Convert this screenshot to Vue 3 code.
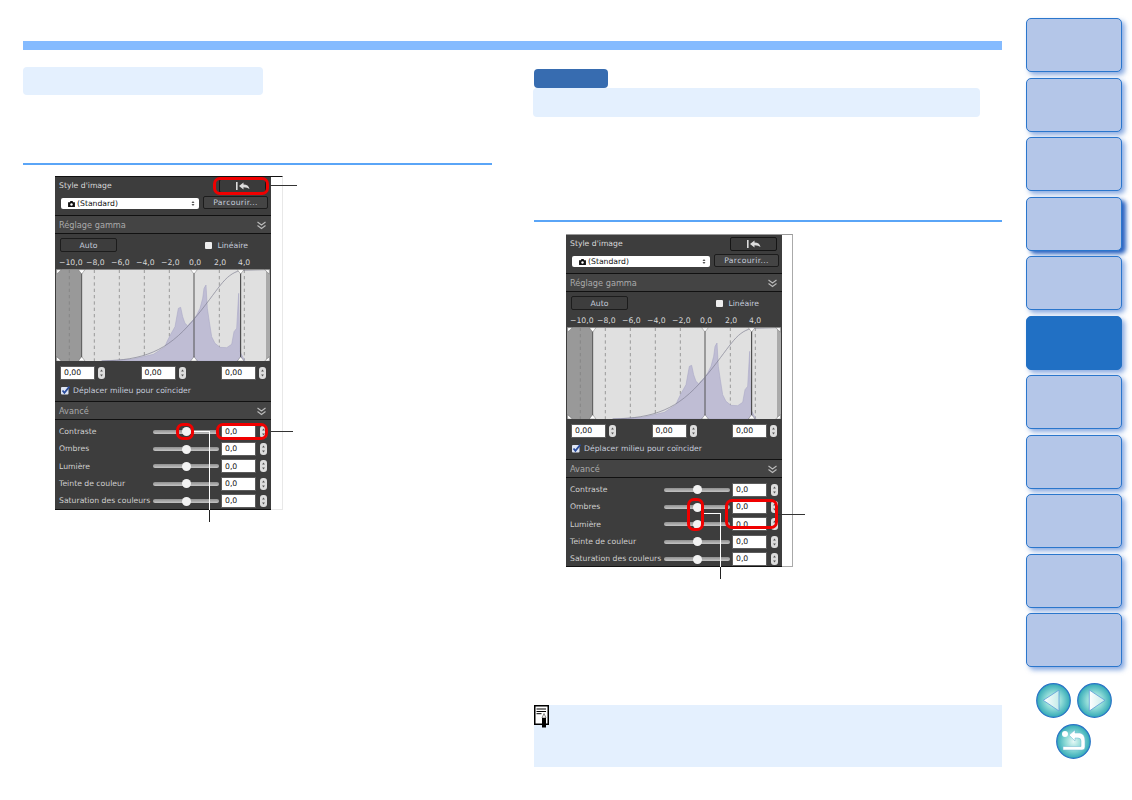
<script setup>
const sliders = ['Contraste', 'Ombres', 'Lumière', 'Teinte de couleur', 'Saturation des couleurs']
const scale = ['−10,0', '−8,0', '−6,0', '−4,0', '−2,0', '0,0', '2,0', '4,0']
const navItems = Array.from({ length: 11 }, (_, i) => i)
const dashes = [58, 133, 208, 283, 358, 508, 583]
const histogram =
  '155,288 245,283 310,268 345,245 350,232 362,208 375,185 385,130 392,127 398,155 405,175 413,182 420,175 430,165 440,150 450,130 458,100 462,70 468,60 472,130 478,170 485,215 495,235 510,247 530,248 545,238 552,200 560,190 566,85 570,260 583,285 585,288'

const box = (o) => ({ left: o.x + 'px', top: o.y + 'px', width: o.w + 'px', height: o.h + 'px' })

const panels = [
  {
    cls: 'first',
    marks: [
      { x: 158, y: 0, w: 56, h: 18 },
      { x: 121, y: 246, w: 18, h: 17 },
      { x: 161, y: 246, w: 52, h: 17 },
    ],
    lines: [
      { x: 215, y: 8, w: 27, h: 1, c: '#333' },
      { x: 216, y: 254, w: 22, h: 1, c: '#333' },
      { x: 139, y: 254, w: 15, h: 1, c: '#fff' },
      { x: 154, y: 254, w: 1, h: 79, c: '#fff' },
      { x: 154, y: 333, w: 1, h: 12, c: '#222' },
    ],
  },
  {
    cls: 'second',
    marks: [
      { x: 121, y: 263, w: 17, h: 33 },
      { x: 159, y: 264, w: 53, h: 30 },
    ],
    lines: [
      { x: 212, y: 279, w: 27, h: 1, c: '#333' },
      { x: 138, y: 278, w: 16, h: 1, c: '#fff' },
      { x: 154, y: 278, w: 1, h: 54, c: '#fff' },
      { x: 154, y: 332, w: 1, h: 12, c: '#222' },
    ],
  },
]
</script>

<template>
  <div class="page">
    <main class="main">
      <div class="topbar"></div>
      <div class="cols">
        <section v-for="(p, pi) in panels" :key="p.cls" class="col" :class="p.cls">
          <div v-if="pi === 1" class="badge"></div>
          <div class="card"></div>
          <div class="rule"></div>

          <div class="figure">
            <div class="panel">
              <div class="sec-style">
                <div class="row-title">
                  <span class="lbl">Style d'image</span>
                  <span class="reset">
                    <svg width="14" height="8" viewBox="0 0 14 8">
                      <rect x="0" y="0" width="1.6" height="8" fill="#ddd" />
                      <path d="M3 4 L7.5 0.5 V2.6 Q12.5 2.6 13.5 7 Q11.5 5.2 7.5 5.2 V7.5 Z" fill="#ddd" />
                    </svg>
                  </span>
                </div>
                <div class="row-select">
                  <span class="select">
                    <svg width="7" height="6" viewBox="0 0 8 7">
                      <path d="M0 1.5 H2 L2.8 0 H5.2 L6 1.5 H8 V7 H0 Z" fill="#111" />
                      <circle cx="4" cy="4" r="1.4" fill="#fff" />
                    </svg>
                    <span class="select-text">(Standard)</span>
                    <svg class="select-caret" width="4" height="7" viewBox="0 0 4 7">
                      <path d="M0.5 3 L2 1 L3.5 3 Z M0.5 4 L2 6 L3.5 4 Z" fill="#555" />
                    </svg>
                  </span>
                  <span class="browse">Parcourir...</span>
                </div>
              </div>

              <div class="sec-head">
                <span>Réglage gamma</span>
                <svg width="9" height="9" viewBox="0 0 9 9">
                  <path d="M0.5 1 L4.5 4 L8.5 1 M0.5 4.5 L4.5 7.5 L8.5 4.5" fill="none" stroke="#bbb" stroke-width="1.1" />
                </svg>
              </div>

              <div class="gamma-top">
                <span class="auto">Auto</span>
                <span class="linear"><i class="check-off"></i>Linéaire</span>
              </div>
              <div class="scale">
                <span v-for="s in scale" :key="s">{{ s }}</span>
              </div>

              <svg class="hist" width="214" height="92" viewBox="18 12 642 276" preserveAspectRatio="none">
                <rect x="18" y="12" width="642" height="276" fill="#e0e0e0" />
                <rect x="18" y="12" width="77" height="276" fill="#999" />
                <rect x="648" y="12" width="12" height="276" fill="#aaa" />
                <line v-for="d in dashes" :key="d" :x1="d" :x2="d" y1="14" y2="288" stroke="#808080" stroke-width="2.2" stroke-dasharray="10 9" />
                <polygon :points="histogram" fill="#bfbdd4" stroke="#a5a3c2" stroke-width="1.5" />
                <line x1="95" x2="95" y1="12" y2="288" stroke="#555" stroke-width="3" />
                <line x1="432" x2="432" y1="12" y2="288" stroke="#555" stroke-width="3" />
                <line x1="572" x2="572" y1="12" y2="288" stroke="#333" stroke-width="3" />
                <path d="M155 288 C280 285 350 260 430 165 S520 30 572 16 L648 14" fill="none" stroke="#7d7d90" stroke-width="2" />
                <rect x="18" y="12" width="642" height="3" fill="#888" />
                <g fill="#fff" stroke="#444" stroke-width="1">
                  <path d="M85 14 H105 L95 27 Z" />
                  <path d="M422 14 H442 L432 27 Z" />
                  <path d="M562 14 H582 L572 27 Z" />
                  <path d="M85 288 H105 L95 275 Z" />
                  <path d="M422 288 H442 L432 275 Z" />
                  <path d="M562 288 H582 L572 275 Z" />
                  <path d="M20 14 H34 L20 27 Z" />
                  <path d="M658 14 H644 L658 27 Z" />
                  <path d="M20 288 H34 L20 275 Z" />
                  <path d="M658 288 H644 L658 275 Z" />
                </g>
              </svg>

              <div class="gamma-inputs">
                <span v-for="n in 3" :key="n" class="field">
                  <span class="input">0,00</span>
                  <svg class="spin" width="7" height="12" viewBox="0 0 7 12">
                    <rect width="7" height="12" rx="3" fill="#ddd" />
                    <path d="M3.5 2.4 L4.9 4.6 H2.1 Z M3.5 9.6 L4.9 7.4 H2.1 Z" fill="#555" />
                  </svg>
                </span>
              </div>

              <div class="midpoint">
                <svg width="9" height="9" viewBox="0 0 9 9">
                  <rect x="0" y="1" width="7.5" height="7.5" rx="1" fill="#dfe6f5" />
                  <path d="M1.5 4.5 L3.4 6.8 L8.5 0.5" fill="none" stroke="#2a4c9c" stroke-width="1.8" />
                </svg>
                <span>Déplacer milieu pour coïncider</span>
              </div>

              <div class="sec-head">
                <span>Avancé</span>
                <svg width="9" height="9" viewBox="0 0 9 9">
                  <path d="M0.5 1 L4.5 4 L8.5 1 M0.5 4.5 L4.5 7.5 L8.5 4.5" fill="none" stroke="#bbb" stroke-width="1.1" />
                </svg>
              </div>

              <div class="sliders">
                <div v-for="s in sliders" :key="s" class="slider-row">
                  <span class="slider-label">{{ s }}</span>
                  <span class="track"><i class="thumb"></i></span>
                  <span class="input">0,0</span>
                  <svg class="spin" width="7" height="12" viewBox="0 0 7 12">
                    <rect width="7" height="12" rx="3" fill="#ddd" />
                    <path d="M3.5 2.4 L4.9 4.6 H2.1 Z M3.5 9.6 L4.9 7.4 H2.1 Z" fill="#555" />
                  </svg>
                </div>
              </div>
            </div>

            <i v-for="(l, i) in p.lines" :key="'l' + i" class="line" :style="{ ...box(l), background: l.c }"></i>
            <i v-for="(m, i) in p.marks" :key="'m' + i" class="mark" :style="box(m)"></i>
          </div>

          <div v-if="pi === 1" class="note">
            <svg width="15" height="23" viewBox="0 0 15 23">
              <rect x="0.75" y="0.75" width="13.5" height="18.5" fill="#fff" stroke="#000" stroke-width="1.5" />
              <path d="M2.5 4 H12 M2.5 6.5 H12 M2.5 8.7 H7.5" stroke="#000" stroke-width="1" />
              <path d="M8 13 L10 8.5 L12 13 Z" fill="#fff" stroke="#555" stroke-width="0.7" />
              <rect x="8" y="13" width="4" height="9.5" fill="#000" />
            </svg>
          </div>
        </section>
      </div>
    </main>

    <aside class="side">
      <div
        v-for="n in navItems"
        :key="n"
        class="nav-btn"
        :class="{ strong: n === 3, active: n === 5 }"
      ></div>
      <div class="arrows">
        <svg width="35" height="35" viewBox="0 0 35 35">
          <defs>
            <radialGradient id="orb" cx="50%" cy="50%" r="55%">
              <stop offset="0%" stop-color="#e6f8f6" />
              <stop offset="45%" stop-color="#8ddad6" />
              <stop offset="100%" stop-color="#1f9fb0" />
            </radialGradient>
            <linearGradient id="tri" x1="0" x2="1" y1="0" y2="0">
              <stop offset="0%" stop-color="#ffffff" />
              <stop offset="100%" stop-color="#c6ecea" />
            </linearGradient>
          </defs>
          <circle cx="17.5" cy="17.5" r="16.8" fill="url(#orb)" stroke="#2a74c6" stroke-width="1.2" />
          <path d="M7.3 17.3 L23 7 V28 Z" fill="url(#tri)" stroke="#5c9cd8" stroke-width="0.8" />
        </svg>
        <svg width="35" height="35" viewBox="0 0 35 35">
          <circle cx="17.5" cy="17.5" r="16.8" fill="url(#orb)" stroke="#2a74c6" stroke-width="1.2" />
          <path d="M28 17.3 L12.3 7 V28 Z" fill="url(#tri)" stroke="#5c9cd8" stroke-width="0.8" />
        </svg>
      </div>
      <svg class="back" width="35" height="35" viewBox="0 0 35 35">
        <circle cx="17.5" cy="17.5" r="16.8" fill="url(#orb)" stroke="#2a74c6" stroke-width="1.2" />
        <circle cx="9" cy="10" r="3" fill="#fff" />
        <path d="M13 11 L19 6 V9 H24 Q29 10 29 17 V23 Q29 26 26 26 H7 V22.5 H25 V17 Q25 14 22 14 H19 V17 Z" fill="#fff" stroke="#6bb5d0" stroke-width="0.5" />
      </svg>
    </aside>
  </div>
</template>

<style>
html, body { background: #fff; }
</style>

<style scoped>
.page {
  display: flex;
  width: 1132px;
  height: 800px;
  padding-left: 23px;
  box-sizing: border-box;
  overflow: hidden;
  background: #fff;
  font-family: "DejaVu Sans", sans-serif;
  font-size: 7.7px;
}
.main { width: 979px; padding-top: 41px; }
.topbar { height: 9px; background: #85bbff; }
.cols { display: flex; gap: 41px; }
.col { width: 469px; }

.card { height: 28px; margin-top: 17px; width: 240px; background: #e4f0fe; border-radius: 4px; }
.second .card { width: 447px; height: 29px; margin-top: 0; }
.badge { width: 74px; height: 19px; margin: 19px 0 0 1px; background: #376cb0; border-radius: 4px; }
.rule { height: 2px; margin-top: 68px; background: #5aa5f7; }
.second .rule { margin-top: 103px; margin-left: 1px; }

.figure {
  position: relative;
  box-sizing: border-box;
  width: 228px;
  height: 334px;
  margin: 11px 0 0 32px;
  border-top: 1px solid #111;
  border-right: 1px solid #e8e8e8;
  border-bottom: 1px solid #e8e8e8;
}
.second .figure {
  width: 227px;
  height: 333px;
  margin: 12px 0 0 33px;
  border-top-color: #999;
  border-right-color: #aaa;
  border-bottom-color: #aaa;
}
.panel {
  box-sizing: border-box;
  width: 216px;
  height: 333px;
  background: #3d3d3d;
  color: #d8d8d8;
  border-bottom: 1px solid #111;
  display: flex;
  flex-direction: column;
  line-height: 1;
}
.second .panel { height: 332px; }

.sec-style { height: 38px; box-sizing: border-box; padding: 2px 0 0 6px; flex: none; }
.row-title { display: flex; justify-content: space-between; align-items: center; height: 14px; padding-right: 5px; }
.lbl { margin-left: -2px; }
.reset {
  box-sizing: border-box;
  width: 47px;
  height: 14px;
  display: flex;
  align-items: center;
  justify-content: center;
  background: #3a3a3a;
  border: 1px solid #151515;
  border-radius: 2px;
}
.row-select { display: flex; align-items: center; margin-top: 3px; }
.select {
  box-sizing: border-box;
  width: 138px;
  height: 11px;
  margin-top: 1px;
  display: flex;
  align-items: center;
  padding: 1px 4px 0 7px;
  background: #fff;
  border-radius: 2px;
  color: #111;
}
.select-text { margin-left: 2px; flex: 1; }
.browse {
  box-sizing: border-box;
  width: 65px;
  height: 13px;
  margin-left: 4px;
  padding-top: 1px;
  display: flex;
  align-items: center;
  justify-content: center;
  border: 1px solid #1c1c1c;
  border-radius: 2px;
  background: #444;
  color: #c5cbdb;
  letter-spacing: 0.3px;
}

.sec-head {
  box-sizing: border-box;
  flex: none;
  height: 19px;
  display: flex;
  align-items: center;
  justify-content: space-between;
  padding: 1px 5px 0 4px;
  background: #444;
  border-top: 1px solid #111;
  border-bottom: 1px solid #111;
  color: #aaa;
  font-size: 8.2px;
}

.gamma-top { display: flex; align-items: center; justify-content: space-between; height: 14px; margin-top: 4px; padding: 0 23px 0 5px; flex: none; }
.auto {
  box-sizing: border-box;
  width: 57px;
  height: 14px;
  padding-top: 1px;
  display: flex;
  align-items: center;
  justify-content: center;
  border: 1px solid #1c1c1c;
  border-radius: 2px;
  color: #c5cbdb;
}
.linear { display: flex; align-items: center; padding-top: 1px; color: #c5cbdb; }
.check-off { width: 7px; height: 7px; margin-right: 5px; background: #eee; border-radius: 1px; }

.scale {
  display: grid;
  grid-template-columns: 27px 25px 25px 25px 28px 25px 24px auto;
  height: 13px;
  margin-top: 4px;
  padding-left: 4px;
  align-items: center;
  flex: none;
  color: #d8d8d8;
}
.hist { display: block; margin-left: 1px; flex: none; }

.gamma-inputs {
  display: flex;
  justify-content: space-between;
  margin-top: 6px;
  padding: 0 5px 0 6px;
  flex: none;
}
.field { display: flex; align-items: center; gap: 4px; }
.input {
  box-sizing: border-box;
  width: 33px;
  height: 12px;
  display: flex;
  align-items: center;
  padding-left: 3px;
  background: #fff;
  color: #111;
  flex: none;
  box-shadow: 0 0 0 1px #5c5c5c;
}
.spin { display: block; flex: none; }

.midpoint { display: flex; align-items: center; gap: 3px; height: 11px; margin: 6px 0 5px; padding-left: 6px; color: #c5cbdb; flex: none; }

.sliders { padding-top: 3px; }
.slider-row { display: flex; align-items: center; height: 17.35px; padding-left: 4px; }
.slider-label { width: 94px; flex: none; color: #d0d0d0; white-space: nowrap; }
.track {
  width: 66px;
  height: 4px;
  display: flex;
  align-items: center;
  justify-content: center;
  flex: none;
  background: linear-gradient(#8f8f8f, #c4c4c4);
  border-radius: 2px;
}
.thumb { width: 9px; height: 9px; flex: none; background: #f2f2f2; border-radius: 50%; }
.slider-row .input { margin-left: 3px; }
.slider-row .spin { margin-left: 5px; }

.mark {
  position: absolute;
  box-sizing: border-box;
  border: 3px solid #f00000;
  border-radius: 7px;
}
.line { position: absolute; }

.note { height: 62px; margin-top: 138px; margin-left: 1px; background: #e4f0fe; }
.note svg { display: block; }

.side { width: 96px; margin-left: 24px; padding-top: 18px; display: flex; flex-direction: column; gap: 5.5px; }
.nav-btn {
  box-sizing: border-box;
  width: 96px;
  height: 54px;
  flex: none;
  background: #b4c6e8;
  border: 1.5px solid #2a76cc;
  border-radius: 5px;
  box-shadow: 3px 3px 5px rgba(40, 100, 200, 0.55);
}
.nav-btn.strong { box-shadow: 4px 3px 4px rgba(30, 90, 190, 0.95); }
.nav-btn.active { background: #2170c4; border-color: #2170c4; }
.arrows { display: flex; gap: 6px; margin: 10px 0 0 10px; }
.arrows svg { display: block; }
.back { display: block; margin: 1px 0 0 30px; }
</style>
